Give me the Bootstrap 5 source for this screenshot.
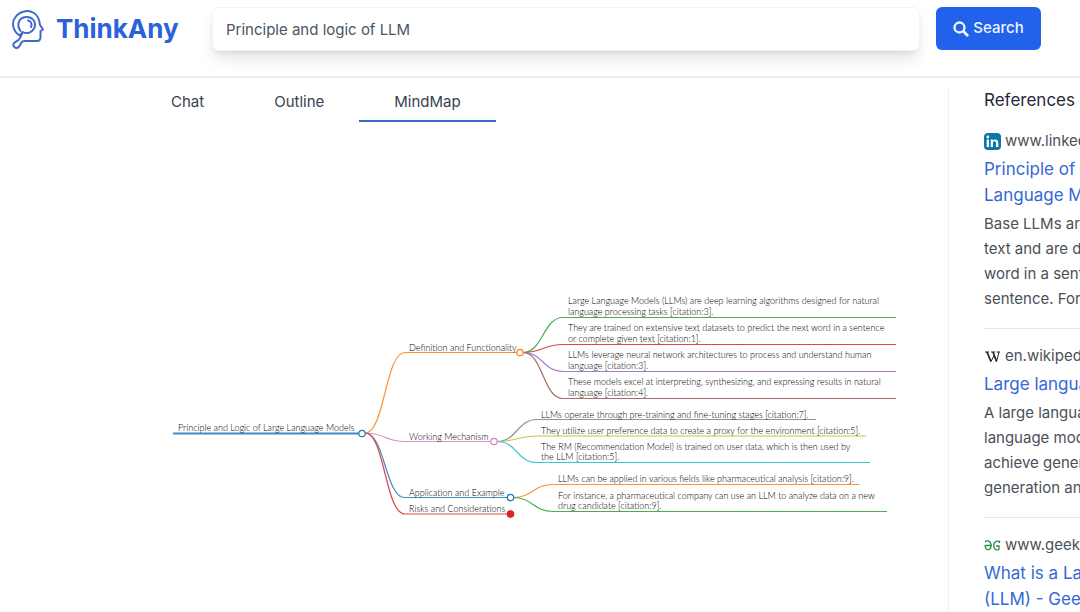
<!DOCTYPE html>
<html lang="en">
<head>
<meta charset="utf-8">
<meta name="viewport" content="width=device-width, initial-scale=1">
<title>ThinkAny</title>
<link href="https://cdn.jsdelivr.net/npm/bootstrap@5.3.0/dist/css/bootstrap.min.css" rel="stylesheet">
<style>
  body { font-family: Inter, "Liberation Sans", sans-serif; color: #374151; background: #fff; }
  .site-header { border-bottom: 2px solid #ebecee; padding: 7px 39px 25px 10px; }
  .brand { color: #2b62d9; font-size: 26px; line-height: 44px; font-weight: 700; width: 186px; gap: 12px; }
  .brand:hover { color: #2b62d9; }
  .query, .query:focus { height: 44px; border: 1px solid #f3f4f5; border-radius: 6px; padding: 0 13px; font-size: 15px; color: #4b5563; box-shadow: 0 10px 15px -2px rgba(0,0,0,.10), 0 3px 6px -3px rgba(0,0,0,.12); }
  .btn-find { background: #2262ea; border: 0; border-radius: 6px; color: #eef4ff; font-size: 15px; font-weight: 500; width: 105px; height: 43px; padding: 0; gap: 4px; }
  .btn-find:hover { background: #1d55d0; color: #fff; }
  .workspace { flex: 0 0 calc(100% - 132px); }
  .tabs { padding-left: 136px; }
  .tabs .nav-link { color: #374151; font-size: 15px; line-height: 24px; padding: 12px 35px 6px; border-bottom: 2px solid transparent; }
  .tabs .nav-link.active { border-color: #3b66c4; }
  .map { margin-top: 8px; width: 100%; height: auto; }
  .map text { font-family: Lato, "Noto Sans", sans-serif; font-weight: 300; font-size: 9px; fill: #000; }
  .refs { flex: 0 0 340px; margin-top: 10px; border-left: 1px solid #f0f1f3; padding-left: 35px; white-space: nowrap; }
  .refs h2 { font-size: 17px; line-height: 24px; font-weight: 400; color: #1f2937; margin-bottom: 17px; }
  .ref { border-bottom: 1px solid #e5e7eb; padding-bottom: 17px; margin-bottom: 15px; }
  .ref .site { font-size: 15px; line-height: 24px; gap: 4px; color: #4b5057; }
  .ref .title { display: block; font-size: 17px; line-height: 26px; margin: 3px 0; color: #3468d6; text-decoration: none; }
  .ref p { font-size: 15px; line-height: 25px; margin: 0; color: #4b5057; }
</style>
</head>
<body class="d-flex flex-column vh-100 overflow-hidden">
<header class="site-header d-flex align-items-start">
  <a href="#" class="brand d-flex align-items-center text-decoration-none flex-shrink-0 me-3">
    <svg width="34" height="42" viewBox="0 0 34 42" fill="none" stroke="#4269c9" stroke-width="2" stroke-linecap="round" stroke-linejoin="round" aria-hidden="true">
      <path d="M11.500 25.500L9.500 27.500C2 22 1.500 14 5.500 9C10 3 18 1.500 24 5C28 7.500 29.500 12 30 17L33 21.500L30.500 23V29Q30.500 33 27 33H14C11 33 11.500 35 9.500 38C7.500 41.500 2.500 40 3.500 36C4.300 33 8.500 34 10 30L12.500 24.500"/>
      <path d="M10.500 23C6 17 9 9.500 16 9C22.500 8.500 26.500 14 24.500 19.500C22.500 24.500 17 26.500 12.500 24"/>
      <path d="M18 12.500C21 13 22.500 16 21 19"/>
    </svg>
    <span>ThinkAny</span>
  </a>
  <form class="d-flex flex-grow-1 gap-3">
    <input class="form-control query" type="text" aria-label="Search query" value="Principle and logic of LLM">
    <button type="button" class="btn btn-find flex-shrink-0 d-flex align-items-center justify-content-center">
      <svg width="16" height="16" viewBox="0 0 16 16" fill="none" stroke="currentColor" stroke-linecap="round" aria-hidden="true"><circle cx="6.500" cy="6.500" r="5" stroke-width="2.300"/><path d="M10.500 10.500L14.300 14.300" stroke-width="2.800"/></svg>
      Search
    </button>
  </form>
</header>
<div class="d-flex flex-grow-1 overflow-hidden">
  <main class="workspace overflow-hidden">
    <nav class="nav tabs flex-nowrap">
      <a class="nav-link" href="#">Chat</a>
      <a class="nav-link" href="#">Outline</a>
      <a class="nav-link active" href="#" aria-current="page">MindMap</a>
    </nav>
    <svg class="map d-block" viewBox="0 130 948 480" role="img" aria-label="Mind map">
      <g fill="none" stroke-width="1.200" opacity=".85">
        <path stroke="#1f77b4" stroke-width="1.800" d="M173 433.500H359"/>
        <path stroke="#ff7f0e" d="M365 433C385 433 385 352.500 405 352.500H517"/>
        <path stroke="#e377c2" d="M365 433C385 433 385 441.500 405 441.500H490"/>
        <path stroke="#1f77b4" d="M365 433C385 433 385 497.500 405 497.500H507"/>
        <path stroke="#d62728" d="M365 433C385 433 385 514 405 514H507"/>
        <path stroke="#2ca02c" d="M523 352.500C543 352.500 543 317.500 563 317.500H896"/>
        <path stroke="#d62728" d="M523 352.500C543 352.500 543 344.500 563 344.500H896"/>
        <path stroke="#9467bd" d="M523 352.500C543 352.500 543 371.500 563 371.500H896"/>
        <path stroke="#8c564b" d="M523 352.500C543 352.500 543 398.500 563 398.500H896"/>
        <path stroke="#7f7f7f" d="M497 441.500C517 441.500 517 419.500 537 419.500H816"/>
        <path stroke="#bcbd22" d="M497 441.500C517 441.500 517 436 537 436H866"/>
        <path stroke="#17becf" d="M497 441.500C517 441.500 517 462.500 537 462.500H870"/>
        <path stroke="#ff7f0e" d="M513 497.500C533 497.500 533 484.500 553 484.500H859"/>
        <path stroke="#2ca02c" d="M513 497.500C533 497.500 533 511.500 553 511.500H887"/>
      </g>
      <g fill="#fff" stroke-width="1.200">
        <circle cx="362" cy="433.500" r="3.200" stroke="#1f77b4"/>
        <circle cx="520" cy="352.500" r="3.200" stroke="#ff7f0e"/>
        <circle cx="494" cy="441.500" r="3.200" stroke="#e377c2"/>
        <circle cx="510.500" cy="497.500" r="3.200" stroke="#1f77b4"/>
        <circle cx="510.500" cy="514" r="3.200" stroke="#d62728" fill="#d62728"/>
      </g>
      <text x="178" y="431">Principle and Logic of Large Language Models</text>
      <text x="409" y="351">Definition and Functionality</text>
      <text x="409" y="440">Working Mechanism</text>
      <text x="409" y="496">Application and Example</text>
      <text x="409" y="512">Risks and Considerations</text>
      <text x="568" y="304">Large Language Models (LLMs) are deep learning algorithms designed for natural</text>
      <text x="568" y="315">language processing tasks [citation:3].</text>
      <text x="568" y="331">They are trained on extensive text datasets to predict the next word in a sentence</text>
      <text x="568" y="342">or complete given text [citation:1].</text>
      <text x="568" y="358">LLMs leverage neural network architectures to process and understand human</text>
      <text x="568" y="369">language [citation:3].</text>
      <text x="568" y="385">These models excel at interpreting, synthesizing, and expressing results in natural</text>
      <text x="568" y="396">language [citation:4].</text>
      <text x="541" y="418">LLMs operate through pre-training and fine-tuning stages [citation:7].</text>
      <text x="541" y="434">They utilize user preference data to create a proxy for the environment [citation:5].</text>
      <text x="541" y="450">The RM (Recommendation Model) is trained on user data, which is then used by</text>
      <text x="541" y="460">the LLM [citation:5].</text>
      <text x="558" y="482">LLMs can be applied in various fields like pharmaceutical analysis [citation:9].</text>
      <text x="558" y="499">For instance, a pharmaceutical company can use an LLM to analyze data on a new</text>
      <text x="558" y="509">drug candidate [citation:9].</text>
    </svg>
  </main>
  <aside class="refs">
    <h2>References</h2>
    <article class="ref">
      <div class="site d-flex align-items-center">
        <svg width="17" height="17" viewBox="0 0 17 17" aria-hidden="true"><rect width="17" height="17" rx="4" fill="#0b78a8"/><g fill="#fff"><circle cx="3.800" cy="4" r="1.400"/><path d="M2.700 6.500H5V14H2.700zM6.700 6.500H8.900V7.600C10 5.800 14.300 5.700 14.300 9.800V14H12V10.200C12 7.600 9 7.900 9 10.200V14H6.700z"/></g></svg>
        <span>www.linkedin.com</span>
      </div>
      <a class="title" href="#">Principle of Large<br>Language Models</a>
      <p>Base LLMs are trained on<br>text and are designed to predict<br>word in a sentence or complete<br>sentence. For example</p>
    </article>
    <article class="ref">
      <div class="site d-flex align-items-center">
        <svg width="17" height="17" viewBox="0 0 17 17" fill="none" stroke="#222" aria-hidden="true"><path d="M1 4H5M7 4H11M12.500 4H16" stroke-width="1"/><path d="M3 4L7 13.500M9 4L12.500 13.500" stroke-width="1.700"/><path d="M7 13.500L10 7.500M12.500 13.500L15 4" stroke-width="1"/></svg>
        <span>en.wikipedia.org</span>
      </div>
      <a class="title" href="#">Large language model</a>
      <p>A large language model is a<br>language model notable for<br>achieve general-purpose<br>generation and other tasks</p>
    </article>
    <article class="ref border-0">
      <div class="site d-flex align-items-center">
        <svg width="17" height="17" viewBox="0 0 17 17" fill="none" stroke="#2f8d46" stroke-width="1.300" aria-hidden="true"><path d="M1 5C3 3 7 3.500 7 8.500C7 14 1 14 1.200 8.500H8M15.500 5.500C14 3.300 9.800 3.500 9.800 8.500C9.800 13.500 14.500 13.700 15 12V9H12M15.500 3.500V6"/></svg>
        <span>www.geeksforgeeks.org</span>
      </div>
      <a class="title" href="#">What is a Large Language Model<br>(LLM) - GeeksforGeeks</a>
    </article>
  </aside>
</div>
<script src="https://cdn.jsdelivr.net/npm/bootstrap@5.3.0/dist/js/bootstrap.bundle.min.js"></script>
</body>
</html>
